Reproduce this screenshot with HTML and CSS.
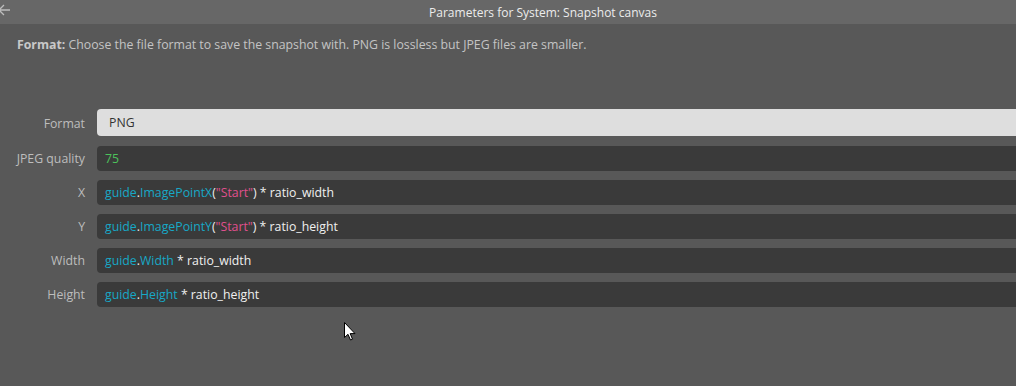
FILE: index.html
```html
<!DOCTYPE html>
<html lang="en">
<head>
    <meta charset="UTF-8">
    <title>Parameters for System: Snapshot canvas</title>
    <link rel="stylesheet" href="styles.css">
</head>
<body>
    <div class="title-bar">
        <span class="back-arrow">
            <svg width="12" height="12" viewBox="0 0 12 12"><path d="M6 1 L1 6 L6 11 M1 6 H12" fill="none" stroke="#bdbdbd" stroke-width="1.3"/></svg>
        </span>
        <span class="title">Parameters for System: Snapshot canvas</span>
    </div>
    <p class="help"><b>Format:</b> Choose the file format to save the snapshot with. PNG is lossless but JPEG files are smaller.</p>

    <div class="params">
        <label class="param-label">Format</label>
        <div class="param-box combo">PNG</div>

        <label class="param-label">JPEG quality</label>
        <div class="param-box"><span class="num">75</span></div>

        <label class="param-label">X</label>
        <div class="param-box"><span class="obj">guide</span>.<span class="obj">ImagePointX</span>(<span class="str">"Start"</span>) * ratio_width</div>

        <label class="param-label">Y</label>
        <div class="param-box"><span class="obj">guide</span>.<span class="obj">ImagePointY</span>(<span class="str">"Start"</span>) * ratio_height</div>

        <label class="param-label">Width</label>
        <div class="param-box"><span class="obj">guide</span>.<span class="obj">Width</span> * ratio_width</div>

        <label class="param-label">Height</label>
        <div class="param-box"><span class="obj">guide</span>.<span class="obj">Height</span> * ratio_height</div>
    </div>

    <svg class="cursor" width="12" height="19" viewBox="0 0 12 19"><path d="M0.5 0.5 L0.5 15.5 L4 12.3 L6.5 18 L8.5 17.2 L6.2 11.6 L11 11.6 Z" fill="#fff" stroke="#000" stroke-width="1"/></svg>
</body>
</html>
```
FILE: styles.css
```css
html, body {
    height: 100%;
}
body {
    margin: 0;
    background-color: #585858;
    font-family: "Open Sans", "Noto Sans", sans-serif;
    font-size: 12.3px;
    color: #c8c8c8;
    overflow: hidden;
}
.title-bar {
    position: relative;
    height: 24px;
    background-color: #676767;
    display: flex;
    justify-content: center;
    align-items: center;
}
.title-bar .title {
    color: #ececec;
    font-size: 12px;
    margin-left: 70px;
}
.back-arrow {
    position: absolute;
    left: -2px;
    top: 3px;
}
.help {
    margin: 13px 0 0 17px;
    line-height: 16px;
    color: #c4c4c4;
}
.help b {
    color: #c8c8c8;
}
.params {
    display: grid;
    grid-template-columns: 85px 1fr;
    column-gap: 12px;
    row-gap: 9px;
    margin-top: 56px;
    margin-right: -10px;
}
.param-label {
    text-align: right;
    color: #bdbdbd;
    align-self: center;
}
.param-box {
    height: 25px;
    line-height: 25px;
    padding-left: 8px;
    background-color: #3a3a3a;
    border-radius: 4px 0 0 4px;
    color: #f0f0f0;
    white-space: nowrap;
}
.param-box.combo {
    height: 27px;
    line-height: 27px;
    padding-left: 12px;
    background-color: #dedede;
    color: #333;
    margin-bottom: 1px;
}
.num {
    color: #4cc25a;
}
.obj {
    color: #17a8c6;
}
.str {
    color: #e0508e;
}
.cursor {
    position: absolute;
    left: 344px;
    top: 322px;
}
```
